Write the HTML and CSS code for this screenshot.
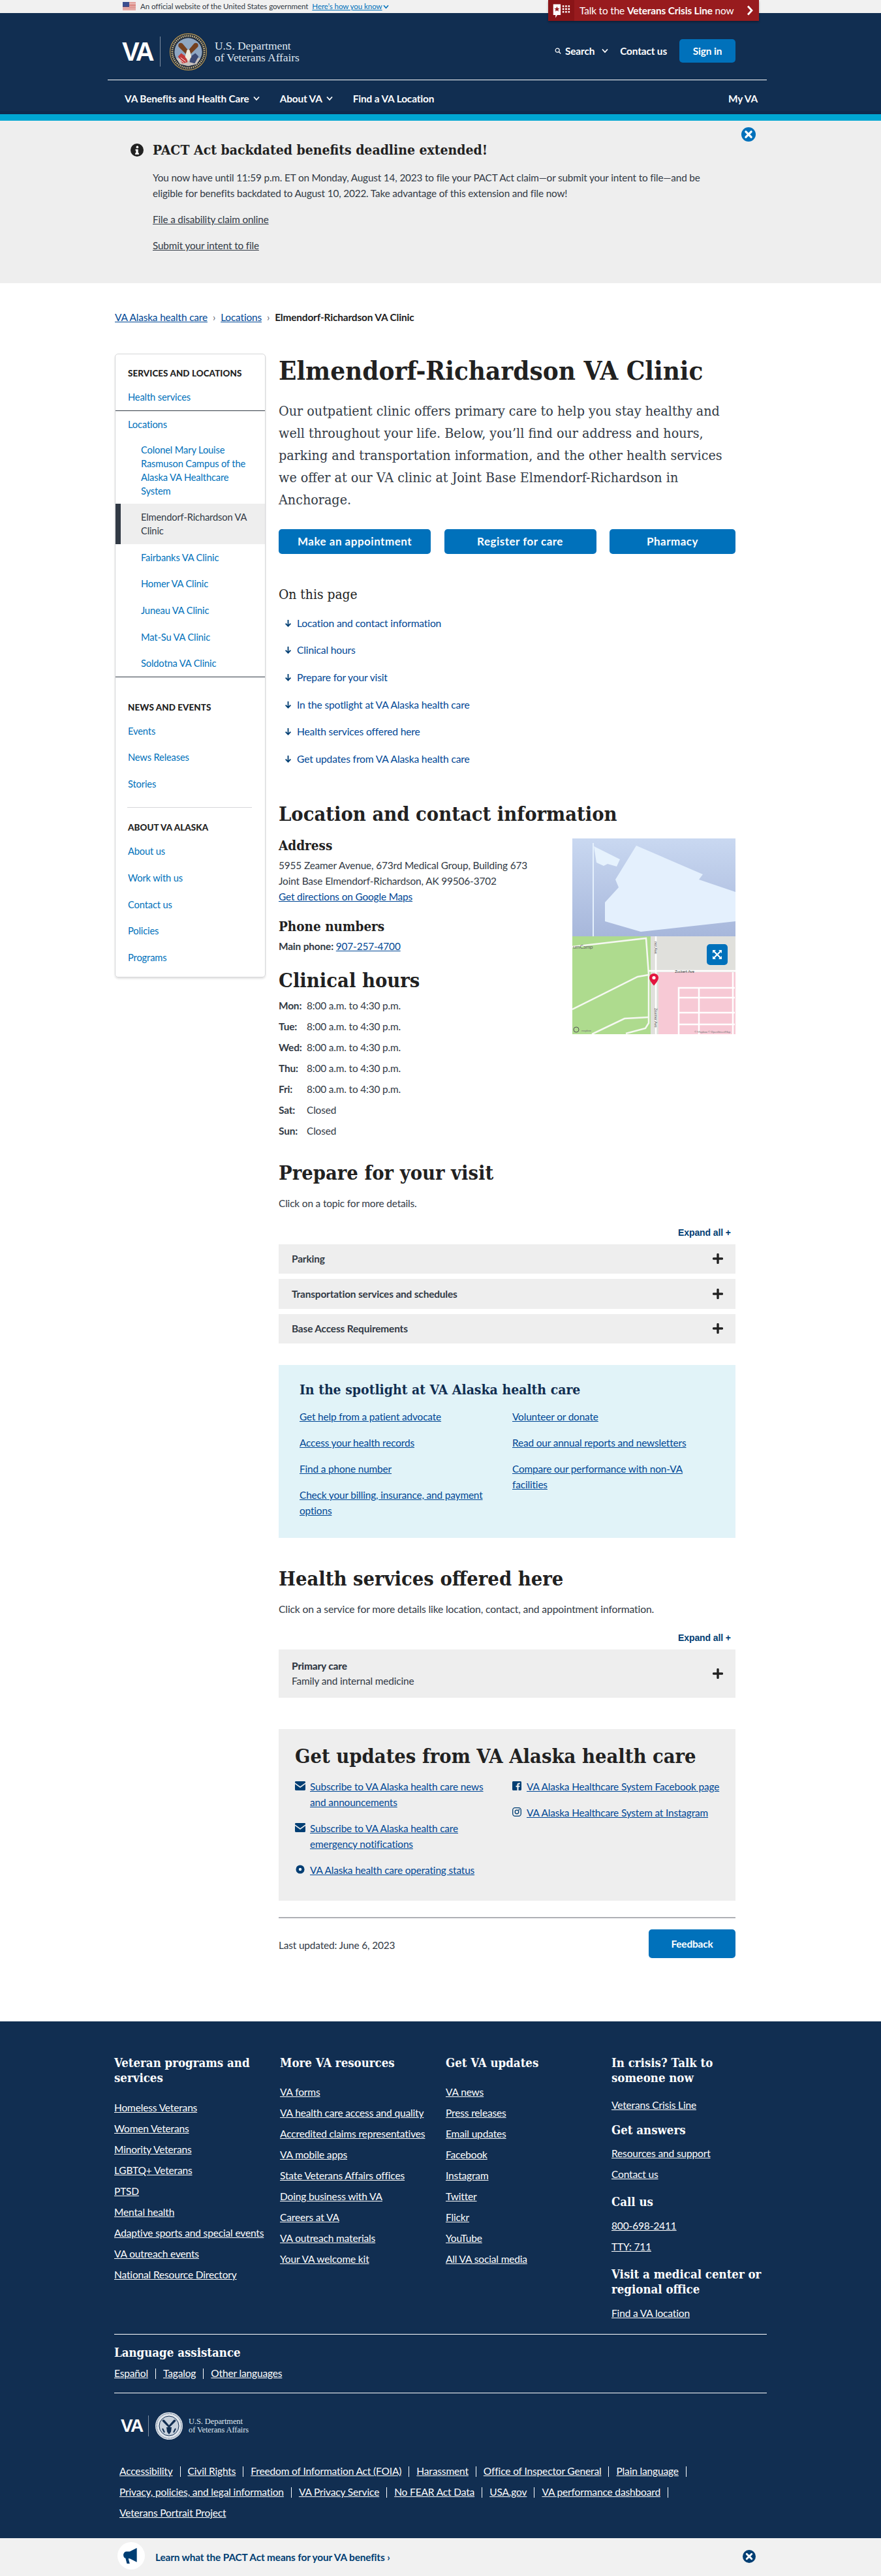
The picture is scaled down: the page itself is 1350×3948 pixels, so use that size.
FILE: index.html
```html
<!DOCTYPE html>
<html lang="en">
<head>
<meta charset="utf-8">
<title>Elmendorf-Richardson VA Clinic</title>
<link rel="stylesheet" href="styles.css">
</head>
<body>
<svg class="defs" aria-hidden="true">
  <symbol id="i-close" viewBox="0 0 24 24"><circle cx="12" cy="12" r="12" fill="currentColor"/><path d="M7.5 7.5l9 9M16.5 7.5l-9 9" stroke="#fff" stroke-width="3.6" stroke-linecap="round"/></symbol>
  <symbol id="i-plus" viewBox="0 0 16 16"><path d="M8 1.5v13M1.5 8h13" stroke="currentColor" stroke-width="3.4" stroke-linecap="round"/></symbol>
  <symbol id="i-down" viewBox="0 0 12 14"><path d="M6 1.5v10M1.8 7.6L6 12l4.2-4.4" fill="none" stroke="currentColor" stroke-width="2"/></symbol>
  <symbol id="i-chev" viewBox="0 0 10 8"><path d="M1 1.5l4 4.5 4-4.5" fill="none" stroke="currentColor" stroke-width="1.8"/></symbol>
  <symbol id="i-mail" viewBox="0 0 16 14"><path d="M0 1.4C0 .6.6 0 1.4 0h13.2c.8 0 1.4.6 1.4 1.4v.8L8 8 0 2.2z" fill="currentColor"/><path d="M0 4.3V12.6c0 .8.6 1.4 1.4 1.4h13.2c.8 0 1.4-.6 1.4-1.4V4.3L8 10z" fill="currentColor"/></symbol>
  <symbol id="i-seal" viewBox="0 0 60 60">
    <circle cx="30" cy="30" r="29.5" fill="#1f2a3a"/><circle cx="30" cy="30" r="28.4" fill="none" stroke="#b59a5c" stroke-width="1.2"/>
    <circle cx="30" cy="30" r="25" fill="none" stroke="#c9b585" stroke-width="3" stroke-dasharray="1.6 1.4"/>
    <circle cx="30" cy="30" r="21.5" fill="#8ea6c2"/><path d="M11 40h38l-6 9-13 3-13-3z" fill="#c9c2bd"/>
    <path d="M14 37l5-5 8 6 2 8-8 2z" fill="#c23a3a"/><path d="M18 39l8 6M16 41l7 6" stroke="#fff" stroke-width="1"/><path d="M46 37l-5-5-7 5-2 9 8 2z" fill="#3c4a74"/>
    <path d="M28 35L15 22c-2-4 2-8 6-5l10 12z" fill="#74401f"/><path d="M32 35l13-13c2-4-2-8-6-5L29 29z" fill="#74401f"/>
    <path d="M27 30h6l2 8-5 6-5-6z" fill="#efe9dc"/><circle cx="30" cy="29" r="2.6" fill="#efe9dc"/>
  </symbol>
</svg>

<div class="govbar">
  <svg class="flag" viewBox="0 0 20 14" aria-hidden="true"><rect width="20" height="14" fill="#fff"/><path d="M0 1h20M0 3.2h20M0 5.4h20M0 7.6h20M0 9.8h20M0 12h20" stroke="#c5453d" stroke-width="1.1"/><rect width="10" height="7.6" fill="#3c4f8f"/></svg>
  <span>An official website of the United States government</span>
  <a class="govlink" href="#">Here’s how you know</a>
  <svg class="govchev"><use href="#i-chev"/></svg>
</div>
<a class="crisis" href="#">
  <span class="crisis-icon"><svg viewBox="0 0 32 32" aria-hidden="true"><path d="M2 5h13v19H9l-3 5v-5H2z" fill="#fff"/><path d="M8.5 9l1.4 3.2 3.3.2-2.6 2.1.9 3.3-3-1.8-3 1.8.9-3.3-2.6-2.1 3.3-.2z" fill="#981b1e"/><path d="M18 7h3v3h-3zM23 7h3v3h-3zM28 7h3v3h-3zM18 12h3v3h-3zM23 12h3v3h-3zM28 12h3v3h-3zM18 17h3v3h-3zM23 17h3v3h-3zM28 17h3v3h-3z" fill="#fff"/></svg></span>
  <span class="crisis-text">Talk to the <b>Veterans Crisis Line</b> now</span>
  <svg class="crisis-chev" viewBox="0 0 10 16" aria-hidden="true"><path d="M2 1.5L8 8l-6 6.5" fill="none" stroke="#fff" stroke-width="2.8"/></svg>
</a>

<header class="site-head">
  <div class="masthead">
    <a class="logo" href="#">
      <span class="logo-va">VA</span>
      <span class="logo-rule"></span>
      <svg class="logo-seal"><use href="#i-seal"/></svg>
      <span class="logo-name">U.S. Department<br>of Veterans Affairs</span>
    </a>
    <div class="head-actions">
      <a class="head-search" href="#"><svg class="ico-search" viewBox="0 0 12 12" aria-hidden="true"><circle cx="5" cy="5" r="3.6" fill="none" stroke="#fff" stroke-width="1.4"/><path d="M7.6 7.6L11 11" stroke="#fff" stroke-width="1.6"/></svg>Search<svg class="chev-w"><use href="#i-chev"/></svg></a>
      <a class="head-contact" href="#">Contact us</a>
      <a class="signin" href="#">Sign in</a>
    </div>
  </div>
  <nav class="mainnav">
    <a href="#">VA Benefits and Health Care<svg class="chev-w"><use href="#i-chev"/></svg></a>
    <a href="#">About VA<svg class="chev-w"><use href="#i-chev"/></svg></a>
    <a href="#">Find a VA Location</a>
    <a class="nav-right" href="#">My VA</a>
  </nav>
</header>
<div class="stripe"></div>

<section class="alert">
  <div class="alert-head">
    <svg class="alert-info" viewBox="0 0 24 24" aria-hidden="true"><circle cx="12" cy="12" r="12" fill="#212121"/><circle cx="12.5" cy="6.5" r="2.2" fill="#fff"/><path d="M9 10.5h5v7h1.5V20h-7v-2.500H10V13H9z" fill="#fff"/></svg>
    <h2>PACT Act backdated benefits deadline extended!</h2>
    <svg class="alert-close"><use href="#i-close"/></svg>
  </div>
  <p>You now have until 11:59 p.m. ET on Monday, August 14, 2023 to file your PACT Act claim—or submit your intent to file—and be<br>eligible for benefits backdated to August 10, 2022. Take advantage of this extension and file now!</p>
  <p class="alert-link"><a href="#">File a disability claim online</a></p>
  <p class="alert-link"><a href="#">Submit your intent to file</a></p>
</section>

<nav class="crumbs">
  <a href="#">VA Alaska health care</a><span class="sep">›</span><a href="#">Locations</a><span class="sep">›</span><b>Elmendorf-Richardson VA Clinic</b>
</nav>

<div class="layout">
  <aside class="side">
    <div class="side-block">
      <h4>SERVICES AND LOCATIONS</h4>
      <a class="side-link" href="#">Health services</a>
    </div>
    <div class="side-block side-ruled">
      <a class="side-link" href="#">Locations</a>
      <a class="side-link side-sub side-first" href="#">Colonel Mary Louise Rasmuson Campus of the Alaska VA Healthcare System</a>
      <a class="side-link side-sub side-active" href="#">Elmendorf-Richardson VA Clinic</a>
      <a class="side-link side-sub" href="#">Fairbanks VA Clinic</a>
      <a class="side-link side-sub" href="#">Homer VA Clinic</a>
      <a class="side-link side-sub" href="#">Juneau VA Clinic</a>
      <a class="side-link side-sub" href="#">Mat-Su VA Clinic</a>
      <a class="side-link side-sub" href="#">Soldotna VA Clinic</a>
    </div>
    <div class="side-block side-ruled side-news">
      <h4>NEWS AND EVENTS</h4>
      <a class="side-link" href="#">Events</a>
      <a class="side-link" href="#">News Releases</a>
      <a class="side-link" href="#">Stories</a>
    </div>
    <div class="side-block side-about">
      <h4>ABOUT VA ALASKA</h4>
      <a class="side-link" href="#">About us</a>
      <a class="side-link" href="#">Work with us</a>
      <a class="side-link" href="#">Contact us</a>
      <a class="side-link" href="#">Policies</a>
      <a class="side-link" href="#">Programs</a>
    </div>
  </aside>

  <main class="main">
    <h1>Elmendorf-Richardson VA Clinic</h1>
    <p class="intro">Our outpatient clinic offers primary care to help you stay healthy and well throughout your life. Below, you’ll find our address and hours, parking and transportation information, and the other health services we offer at our VA clinic at Joint Base Elmendorf-Richardson in Anchorage.</p>
    <div class="cta-row">
      <a class="btn btn-cta" href="#">Make an appointment</a>
      <a class="btn btn-cta" href="#">Register for care</a>
      <a class="btn btn-cta" href="#">Pharmacy</a>
    </div>
    <h3 class="otp-title">On this page</h3>
    <ul class="otp">
      <li><svg class="otp-arrow"><use href="#i-down"/></svg><a href="#">Location and contact information</a></li>
      <li><svg class="otp-arrow"><use href="#i-down"/></svg><a href="#">Clinical hours</a></li>
      <li><svg class="otp-arrow"><use href="#i-down"/></svg><a href="#">Prepare for your visit</a></li>
      <li><svg class="otp-arrow"><use href="#i-down"/></svg><a href="#">In the spotlight at VA Alaska health care</a></li>
      <li><svg class="otp-arrow"><use href="#i-down"/></svg><a href="#">Health services offered here</a></li>
      <li><svg class="otp-arrow"><use href="#i-down"/></svg><a href="#">Get updates from VA Alaska health care</a></li>
    </ul>

    <h2 class="h2-loc">Location and contact information</h2>
    <div class="loc-row">
      <div class="loc-info">
        <h3 class="h3-first">Address</h3>
        <p class="loc-lines">5955 Zeamer Avenue, 673rd Medical Group, Building 673<br>Joint Base Elmendorf-Richardson, AK 99506-3702<br><a class="link" href="#">Get directions on Google Maps</a></p>
        <h3 class="h3-phone">Phone numbers</h3>
        <p class="loc-lines"><b>Main phone:</b> <a class="link" href="#">907-257-4700</a></p>
        <h2 class="h2-hours">Clinical hours</h2>
        <dl class="hours">
          <dt>Mon:</dt><dd>8:00 a.m. to 4:30 p.m.</dd>
          <dt>Tue:</dt><dd>8:00 a.m. to 4:30 p.m.</dd>
          <dt>Wed:</dt><dd>8:00 a.m. to 4:30 p.m.</dd>
          <dt>Thu:</dt><dd>8:00 a.m. to 4:30 p.m.</dd>
          <dt>Fri:</dt><dd>8:00 a.m. to 4:30 p.m.</dd>
          <dt>Sat:</dt><dd>Closed</dd>
          <dt>Sun:</dt><dd>Closed</dd>
        </dl>
      </div>
      <div class="map">
        <svg viewBox="0 0 250 300" aria-label="Map of the clinic location">
          <defs><linearGradient id="sky" x1="0" y1="0" x2="0" y2="1"><stop offset="0" stop-color="#c9d8f1"/><stop offset="1" stop-color="#a7b7db"/></linearGradient></defs>
          <rect width="250" height="150" fill="url(#sky)"/>
          <path d="M31 7h2v143h-2z" fill="#e4f0fc"/>
          <path d="M33 12l40 20-5 11-14-4-6 3-11-5z" fill="#e6f2fd"/>
          <path d="M98 11l102 44-6 8 56 19v45l-145 16-55-16V98l21-23-5-12z" fill="#e4f0fd"/>
          <rect y="150" width="250" height="150" fill="#aedb8e"/>
          <path d="M120 150h130v150H120z" fill="#e0e0dc"/>
          <path d="M132 205h118v95H132z" fill="#f7c9d5"/>
          <g fill="none" stroke="#f6f8f2" stroke-width="2.500">
            <path d="M0 166l113-13 4 55v75l-5 8-30 8"/>
            <path d="M0 262l100-50 17-3"/>
            <path d="M30 300l50-24 37-2"/>
          </g>
          <g fill="none" stroke="#fff" stroke-width="2.500">
            <path d="M128 150v150"/>
            <path d="M117 203h133"/>
            <path d="M163 300v-71h86M246 205v95M194 229v71M163 244h86M163 267h86M163 285h86"/>
          </g>
          <text x="1" y="169" class="map-l">umCamp</text>
          <text x="157" y="206" class="map-s">Zuckert Ave</text>
          <text transform="translate(126 158) rotate(90)" class="map-s">ner Ave</text>
          <text transform="translate(126 260) rotate(90)" class="map-s">Zeamer Ave</text>
          <text x="187" y="298" class="map-c">© Mapbox © OpenStreetMap</text>
          <circle cx="6" cy="293" r="4" fill="none" stroke="#555"/><text x="14" y="296" class="map-c">mapbox</text>
          <path d="M125 207c-4.500 0-7 3.200-7 6.800 0 4.700 7 11.700 7 11.700s7-7 7-11.700c0-3.600-2.500-6.800-7-6.800z" fill="#e3153f"/><circle cx="125" cy="213.500" r="2.600" fill="#fff"/>
        </svg>
        <a class="map-expand" href="#"><svg viewBox="0 0 32 32" aria-label="Expand map"><path d="M9 9h5l-1.700 1.700L16 14.400l3.700-3.700L18 9h5v5l-1.700-1.700L17.600 16l3.700 3.700L23 18v5h-5l1.700-1.700L16 17.600l-3.700 3.700L14 23H9v-5l1.700 1.700 3.700-3.700-3.700-3.700L9 14z" fill="#fff"/></svg></a>
      </div>
    </div>

    <h2 class="h2-prep">Prepare for your visit</h2>
    <p class="lead-prep">Click on a topic for more details.</p>
    <a class="expand exp-prep" href="#">Expand all +</a>
    <div class="acc-list">
      <button class="acc"><span>Parking</span><svg class="plus"><use href="#i-plus"/></svg></button>
      <button class="acc"><span>Transportation services and schedules</span><svg class="plus"><use href="#i-plus"/></svg></button>
      <button class="acc"><span>Base Access Requirements</span><svg class="plus"><use href="#i-plus"/></svg></button>
    </div>

    <section class="spot">
      <h3>In the spotlight at VA Alaska health care</h3>
      <div class="spot-grid">
        <ul>
          <li><a class="link" href="#">Get help from a patient advocate</a></li>
          <li><a class="link" href="#">Access your health records</a></li>
          <li><a class="link" href="#">Find a phone number</a></li>
          <li><a class="link" href="#">Check your billing, insurance, and payment options</a></li>
        </ul>
        <ul>
          <li><a class="link" href="#">Volunteer or donate</a></li>
          <li><a class="link" href="#">Read our annual reports and newsletters</a></li>
          <li><a class="link" href="#">Compare our performance with non-VA facilities</a></li>
        </ul>
      </div>
    </section>

    <h2 class="h2-serv">Health services offered here</h2>
    <p class="lead-serv">Click on a service for more details like location, contact, and appointment information.</p>
    <a class="expand exp-serv" href="#">Expand all +</a>
    <button class="acc acc-tall"><span><b>Primary care</b><i>Family and internal medicine</i></span><svg class="plus"><use href="#i-plus"/></svg></button>

    <section class="updates">
      <h2>Get updates from VA Alaska health care</h2>
      <div class="up-grid">
        <ul class="up-left">
          <li><svg class="up-ico"><use href="#i-mail"/></svg><a class="link" href="#">Subscribe to VA Alaska health care news and announcements</a></li>
          <li><svg class="up-ico"><use href="#i-mail"/></svg><a class="link" href="#">Subscribe to VA Alaska health care emergency notifications</a></li>
          <li><svg class="up-ico" viewBox="0 0 16 16" aria-hidden="true"><circle cx="8" cy="8" r="7.500" fill="currentColor"/><circle cx="8" cy="8" r="2.500" fill="#fff"/></svg><a class="link" href="#">VA Alaska health care operating status</a></li>
        </ul>
        <ul class="up-right">
          <li><svg class="up-ico-r" viewBox="0 0 14 14" aria-hidden="true"><path d="M1.500 0h11C13.300 0 14 .7 14 1.500v11c0 .8-.7 1.500-1.500 1.500H9.600V8.800h1.800l.3-2.100H9.600V5.400c0-.6.300-1 1-1h1.200V2.500c-.4 0-1-.1-1.600-.1-1.700 0-2.800 1-2.800 2.800v1.500H5.500v2.100h1.900V14H1.500C.7 14 0 13.300 0 12.500v-11C0 .7.700 0 1.500 0z" fill="currentColor"/></svg><a class="link" href="#">VA Alaska Healthcare System Facebook page</a></li>
          <li><svg class="up-ico-r" viewBox="0 0 14 14" aria-hidden="true"><rect x=".7" y=".7" width="12.600" height="12.600" rx="3.500" fill="none" stroke="currentColor" stroke-width="1.300"/><circle cx="7" cy="7" r="2.800" fill="none" stroke="currentColor" stroke-width="1.300"/><circle cx="10.500" cy="3.500" r=".9" fill="currentColor"/></svg><a class="link" href="#">VA Alaska Healthcare System at Instagram</a></li>
        </ul>
      </div>
    </section>

    <div class="last-row">
      <span>Last updated: June 6, 2023</span>
      <a class="btn btn-feedback" href="#">Feedback</a>
    </div>
  </main>
</div>

<footer class="foot">
  <div class="foot-inner">
    <div class="foot-cols">
      <div>
        <h3>Veteran programs and services</h3>
        <ul>
          <li><a href="#">Homeless Veterans</a></li><li><a href="#">Women Veterans</a></li><li><a href="#">Minority Veterans</a></li><li><a href="#">LGBTQ+ Veterans</a></li><li><a href="#">PTSD</a></li><li><a href="#">Mental health</a></li><li><a href="#">Adaptive sports and special events</a></li><li><a href="#">VA outreach events</a></li><li><a href="#">National Resource Directory</a></li>
        </ul>
      </div>
      <div>
        <h3>More VA resources</h3>
        <ul>
          <li><a href="#">VA forms</a></li><li><a href="#">VA health care access and quality</a></li><li><a href="#">Accredited claims representatives</a></li><li><a href="#">VA mobile apps</a></li><li><a href="#">State Veterans Affairs offices</a></li><li><a href="#">Doing business with VA</a></li><li><a href="#">Careers at VA</a></li><li><a href="#">VA outreach materials</a></li><li><a href="#">Your VA welcome kit</a></li>
        </ul>
      </div>
      <div>
        <h3>Get VA updates</h3>
        <ul>
          <li><a href="#">VA news</a></li><li><a href="#">Press releases</a></li><li><a href="#">Email updates</a></li><li><a href="#">Facebook</a></li><li><a href="#">Instagram</a></li><li><a href="#">Twitter</a></li><li><a href="#">Flickr</a></li><li><a href="#">YouTube</a></li><li><a href="#">All VA social media</a></li>
        </ul>
      </div>
      <div class="foot-crisis">
        <h3>In crisis? Talk to someone now</h3>
        <ul class="fc-first"><li><a href="#">Veterans Crisis Line</a></li></ul>
        <h3 class="fc-h">Get answers</h3>
        <ul><li><a href="#">Resources and support</a></li><li><a href="#">Contact us</a></li></ul>
        <h3 class="fc-h">Call us</h3>
        <ul><li><a href="#">800-698-2411</a></li><li><a href="#">TTY: 711</a></li></ul>
        <h3 class="fc-h">Visit a medical center or regional office</h3>
        <ul><li><a href="#">Find a VA location</a></li></ul>
      </div>
    </div>
    <div class="foot-lang">
      <h3>Language assistance</h3>
      <p><a href="#">Español</a><i></i><a href="#">Tagalog</a><i></i><a href="#">Other languages</a></p>
    </div>
    <a class="logo logo-foot" href="#">
      <span class="logo-va">VA</span>
      <span class="logo-rule"></span>
      <svg class="seal-foot" viewBox="0 0 44 44" aria-hidden="true"><circle cx="22" cy="22" r="21" fill="#dfe5ec"/><circle cx="22" cy="22" r="19" fill="none" stroke="#112e51" stroke-width=".8" stroke-dasharray="1.500 1"/><circle cx="22" cy="22" r="15" fill="#c8d2dd" stroke="#112e51" stroke-width="1"/><path d="M22 25L12 15c-1-2 1-3 3-2l7 8 7-8c2-1 4 0 3 2zM18 24h8l-1 7-3 4-3-4z" fill="#112e51"/><path d="M15 32l-3-6M29 32l3-6" stroke="#112e51" stroke-width="2"/></svg>
      <span class="logo-name">U.S. Department<br>of Veterans Affairs</span>
    </a>
    <p class="foot-legal">
      <a href="#">Accessibility</a><i></i><a href="#">Civil Rights</a><i></i><a href="#">Freedom of Information Act (FOIA)</a><i></i><a href="#">Harassment</a><i></i><a href="#">Office of Inspector General</a><i></i><a href="#">Plain language</a><i></i><br>
      <a href="#">Privacy, policies, and legal information</a><i></i><a href="#">VA Privacy Service</a><i></i><a href="#">No FEAR Act Data</a><i></i><a href="#">USA.gov</a><i></i><a href="#">VA performance dashboard</a><i></i><br>
      <a href="#">Veterans Portrait Project</a>
    </p>
  </div>
</footer>

<div class="promo">
  <span class="promo-icon"><svg viewBox="0 0 24 24" aria-hidden="true"><path d="M20 1v20l-10-5H8l2 7H6l-2-7.500C2 15 1 13 1 11s1.500-5 4-5h5z" fill="#003e73"/></svg></span>
  <a class="promo-text" href="#">Learn what the PACT Act means for your VA benefits ›</a>
  <svg class="promo-close"><use href="#i-close"/></svg>
</div>
</body>
</html>
```

FILE: styles.css
```css
:root {
  --sans: Lato, "Liberation Sans", sans-serif;
  --slab: "DejaVu Serif Condensed", "DejaVu Serif", serif;
  --navy: #112e51;
  --blue: #0071bb;
  --link: #004795;
  --text: #323a45;
  --ink: #212121;
  --gray: #eeeeee;
}
* { box-sizing: border-box; }
html, body { margin: 0; padding: 0; }
body { width: 1350px; font: 15.4px/24px var(--sans); color: var(--text); background: #fff; position: relative; letter-spacing: -.15px; }
p, h1, h2, h3, h4, ul, dl, dd { margin: 0; padding: 0; }
ul { list-style: none; }
a { color: inherit; }
.defs { display: none; }

.govbar { height: 20px; background: #f1f1f1; padding-left: 188px; display: flex; align-items: center; font-size: 11.6px; color: #323a45; letter-spacing: -.1px; }
.flag { width: 20px; height: 14px; margin-right: 7px; }
.govlink { margin-left: 6px; color: #0071bb; }
.govchev { width: 9px; height: 7px; margin-left: 1px; color: #0071bb; }

.crisis { position: absolute; top: 0; left: 840px; width: 323px; height: 32px; background: #981b1e; display: flex; align-items: center; color: #fff; text-decoration: none; font-size: 15.4px; box-shadow: 0 2px 3px rgba(0,0,0,.3); }
.crisis-icon { width: 40px; height: 32px; background: #8a1417; display: flex; align-items: center; justify-content: center; }
.crisis-icon svg { width: 28px; height: 28px; }
.crisis-text { margin-left: 8px; flex: 1; }
.crisis-chev { width: 10px; height: 16px; margin-right: 9px; }

.site-head { background: var(--navy); height: 155px; padding: 0 175px 0 165px; color: #fff; border-bottom: 5px solid #0f2a4c; }
.masthead { height: 103px; border-bottom: 1px solid #fff; padding: 27px 0 0 22px; display: flex; justify-content: space-between; width: 1010px; }
.logo { display: flex; align-items: center; height: 64px; color: #fff; text-decoration: none; }
.logo-va { font: bold 40px/1 "Liberation Sans", sans-serif; letter-spacing: -3px; width: 47px; }
.logo-rule { width: 1px; height: 46px; background: rgba(255,255,255,.45); margin: 0 13px 0 11px; }
.logo-seal { width: 59px; height: 59px; margin-right: 11px; }
.logo-name { font: 17.5px/18px "Liberation Serif", serif; color: #dfe6ef; letter-spacing: -.1px; }
.head-actions { display: flex; align-items: center; height: 36px; margin: 13px 48px 0 0; font-weight: 700; font-size: 15.4px; }
.head-actions a { color: #fff; text-decoration: none; }
.head-search { display: flex; align-items: center; }
.ico-search { width: 10px; height: 10px; margin-right: 6px; }
.chev-w { width: 10px; height: 8px; margin-left: 11px; color: #fff; }
.head-contact { margin-left: 18px; margin-right: 19px; }
.signin { width: 86px; height: 36px; background: var(--blue); border-radius: 5px; display: flex; align-items: center; justify-content: center; }
.mainnav { display: flex; height: 46px; align-items: center; padding: 10px 0 0 26px; font-weight: 700; font-size: 15.4px; }
.mainnav a { color: #fff; text-decoration: none; margin-right: 31px; display: flex; align-items: center; }
.mainnav a .chev-w { margin-left: 6px; }
.mainnav .nav-right { margin: 0 14px 0 auto; }
.stripe { height: 10px; background: #00a6d2; }

.alert { height: 249px; background: var(--gray); padding: 30px 203px 0 200px; font-size: 15.3px; }
.alert-head { position: relative; display: flex; align-items: center; height: 30px; }
.alert-info { width: 20px; height: 20px; margin-right: 14px; flex: none; }
.alert-head h2 { font: bold 21px/30px var(--slab); color: var(--ink); letter-spacing: 0; }
.alert-close { position: absolute; left: 936px; top: -20px; width: 22px; height: 22px; color: var(--blue); }
.alert p { padding-left: 34px; color: var(--text); }
.alert > p:first-of-type { margin-top: 15px; }
.alert-link { margin-top: 16px; color: var(--link); }
.crumbs { padding: 40px 0 0 176px; height: 108px; font-size: 15.4px; color: var(--link); }
.crumbs b { color: var(--ink); }
.sep { margin: 0 8px; color: #5b616b; }

.layout { display: grid; grid-template-columns: 231px 700px; column-gap: 20px; padding-left: 176px; align-items: start; }
.side { height: 956px; border: 1px solid #d6d7d9; border-radius: 5px; box-shadow: 0 2px 3px rgba(0,0,0,.12); font-size: 14.7px; line-height: 20.7px; color: var(--blue); padding-top: 19px; }
.side h4 { font: 900 13.4px/21px var(--sans); color: var(--ink); padding-left: 19px; letter-spacing: .1px; margin-bottom: 5px; }
.side-link { display: block; padding: 10px 20px 10px 19px; text-decoration: none; }
.side-ruled { border-top: 1px solid #323a45; }
.side-sub { padding-left: 39px; }
.side-first { margin-top: -1px; }
.side-active { color: var(--text); background: var(--gray); border-left: 8px solid #323a45; padding-left: 31px; }
.side-news { padding-top: 35.5px; }
.side-about { margin: 15px 20px 0 18px; border-top: 1px solid #d6d7d9; padding-top: 20.5px; }
.side-about h4 { padding-left: 1px; }
.side-about .side-link { padding-left: 1px; }

.main { padding-top: 2px; }
h1 { font: bold 40px/48px var(--slab); color: var(--ink); letter-spacing: 0; white-space: nowrap; }
.intro { font: 21.3px/34px var(--slab); margin-top: 21px; color: var(--text); letter-spacing: 0; }
.cta-row { display: grid; grid-template-columns: 233px 233px 193px; column-gap: 20.5px; margin-top: 28px; }
.btn { height: 38px; background: var(--blue); color: #fff; font-weight: 700; font-size: 15.4px; text-decoration: none; border-radius: 5px; display: flex; align-items: center; justify-content: center; }
.btn-cta { font-size: 17px; letter-spacing: .5px; }
.otp-title { font: 20.8px/28px var(--slab); color: var(--ink); margin-top: 48px; letter-spacing: 0; }
.otp { margin-top: 9px; color: var(--link); }
.otp li { height: 41.6px; display: flex; align-items: center; padding-left: 9px; font-size: 15.6px; }
.otp a { text-decoration: none; }
.otp-arrow { width: 11px; height: 14px; margin-right: 8px; color: #003e73; }
h2 { font: bold 30.6px/40px var(--slab); color: var(--ink); letter-spacing: 0; }
h3 { font: bold 20.5px/28px var(--slab); color: var(--ink); letter-spacing: 0; }
.h2-loc { margin-top: 43px; }
.loc-row { display: flex; justify-content: space-between; margin-top: 15px; }
.loc-info { width: 440px; }
.loc-lines { margin-top: 4px; }
.link { color: var(--link); }
.h3-phone { margin-top: 20px; }
.h2-hours { margin-top: 20px; }
.hours { margin-top: 3px; display: grid; grid-template-columns: 43px 1fr; grid-auto-rows: 32px; align-items: center; }
.hours dt { font-weight: 700; }
.map { position: relative; width: 250px; height: 300px; margin-top: 3px; }
.map > svg { display: block; width: 250px; height: 300px; }
.map-l { font: 8px Lato, sans-serif; fill: #666; }
.map-s { font: 6px Lato, sans-serif; fill: #444; }
.map-c { font: 4.5px Lato, sans-serif; fill: #777; }
.map-expand { position: absolute; left: 206px; top: 162px; width: 32px; height: 32px; background: var(--blue); border-radius: 5px; }
.map-expand svg { display: block; width: 32px; height: 32px; }
.h2-prep { margin-top: 28px; }
.lead-prep { margin-top: 15px; }
.expand { display: block; width: 78px; margin-left: auto; margin-right: 10px; font: bold 14px/20px "Liberation Sans", sans-serif; color: #003e73; text-decoration: none; letter-spacing: -.1px; white-space: nowrap; }
.exp-prep { margin-top: 23px; }
.acc-list { margin-top: 8px; display: grid; row-gap: 8px; }
.acc { width: 100%; height: 45.5px; border: 0; background: var(--gray); display: flex; align-items: center; justify-content: space-between; padding: 0 20px; font: 700 15.4px/24px var(--sans); color: var(--text); text-align: left; letter-spacing: -.15px; }
.plus { width: 16px; height: 16px; color: var(--ink); flex: none; margin-right: -1px; }
.spot { margin-top: 32.5px; height: 265px; background: #e1f3f8; padding: 24px 32px 0; }
.spot h3 { font-size: 21px; color: #112e51; }
.spot-grid { display: grid; grid-template-columns: 310px 310px; column-gap: 16px; margin-top: 15px; }
.spot li { line-height: 24px; margin-bottom: 16px; }
.h2-serv { margin-top: 42px; }
.lead-serv { margin-top: 15px; font-size: 15.7px; }
.exp-serv { margin-top: 22px; }
.acc-tall { margin-top: 8px; height: 74px; }
.acc-tall b, .acc-tall i { display: block; font-style: normal; line-height: 23px; }
.acc-tall i { font-weight: 400; color: var(--text); }
.updates { margin-top: 48px; height: 263px; background: var(--gray); padding: 21px 25px 0; }
.up-grid { display: grid; grid-template-columns: 333px 1fr; margin-top: 15px; color: var(--link); }
.up-left li, .up-right li { display: flex; margin-bottom: 16px; }
.up-ico { width: 16px; height: 14px; flex: none; margin: 4px 7px 0 0; color: #003e73; }
.up-ico-r { width: 14px; height: 14px; flex: none; margin: 4px 8px 0 0; color: #003e73; }
.up-left .link { max-width: 280px; }
.up-right .link { white-space: nowrap; }
.last-row { margin-top: 25px; border-top: 2px solid #aeb0b5; padding-top: 17px; display: flex; justify-content: space-between; align-items: center; }
.last-row span { padding-top: 4px; }
.btn-feedback { width: 133px; height: 44px; }

.foot { margin-top: 97px; background: var(--navy); height: 792px; color: #fff; padding: 52px 0 0 175px; }
.foot-inner { width: 1000px; }
.foot a { color: #fff; }
.foot-cols { display: grid; grid-template-columns: repeat(4, 254px); width: 1016px; height: 412px; }
.foot h3 { font-size: 18.5px; line-height: 23.5px; color: #fff; }
.foot-cols h3 + ul { margin-top: 17px; }
.foot-cols li { height: 32px; line-height: 32px; font-size: 15.5px; white-space: nowrap; }
.foot-crisis h3 { width: 230px; }
.foot-crisis h3 + ul { margin-top: 8px; }
.foot-crisis h3 + .fc-first { margin-top: 13px; }
.fc-h { margin-top: 15px; }
.foot-crisis .fc-first + .fc-h { margin-top: 11px; }
.foot-lang { border-top: 1px solid #fff; border-bottom: 1px solid #fff; margin-top: 15px; height: 91px; padding-top: 16px; }
.foot-lang h3 { line-height: 24px; }
.foot-lang p { margin-top: 7px; font-size: 15.5px; }
.foot-lang i, .foot-legal i { display: inline-block; width: 1px; height: 16px; background: #fff; margin: 0 11px; vertical-align: -3px; }
.logo-foot { margin: 26px 0 0 10px; height: 48px; }
.logo-foot .logo-va { font-size: 28px; width: 36px; letter-spacing: -1.5px; }
.logo-foot .logo-rule { height: 32px; margin: 0 9px 0 6px; }
.seal-foot { width: 44px; height: 44px; margin-right: 8px; }
.logo-foot .logo-name { font-size: 12.5px; line-height: 13px; }
.foot-legal { margin-top: 29px; padding-left: 8px; line-height: 32px; font-size: 15.5px; white-space: nowrap; }
.promo { height: 58px; background: #f1f1f1; display: flex; align-items: center; padding-left: 180px; position: relative; }
.promo-icon { width: 42px; height: 42px; border-radius: 50%; background: #fff; display: flex; align-items: center; justify-content: center; margin-top: -4px; }
.promo-icon svg { width: 26px; height: 26px; }
.promo-text { margin-left: 16px; color: #003e73; font-weight: 700; text-decoration: none; font-size: 15.4px; }
.promo-close { position: absolute; left: 1138px; top: 18px; width: 20px; height: 20px; color: #003e73; }
```
